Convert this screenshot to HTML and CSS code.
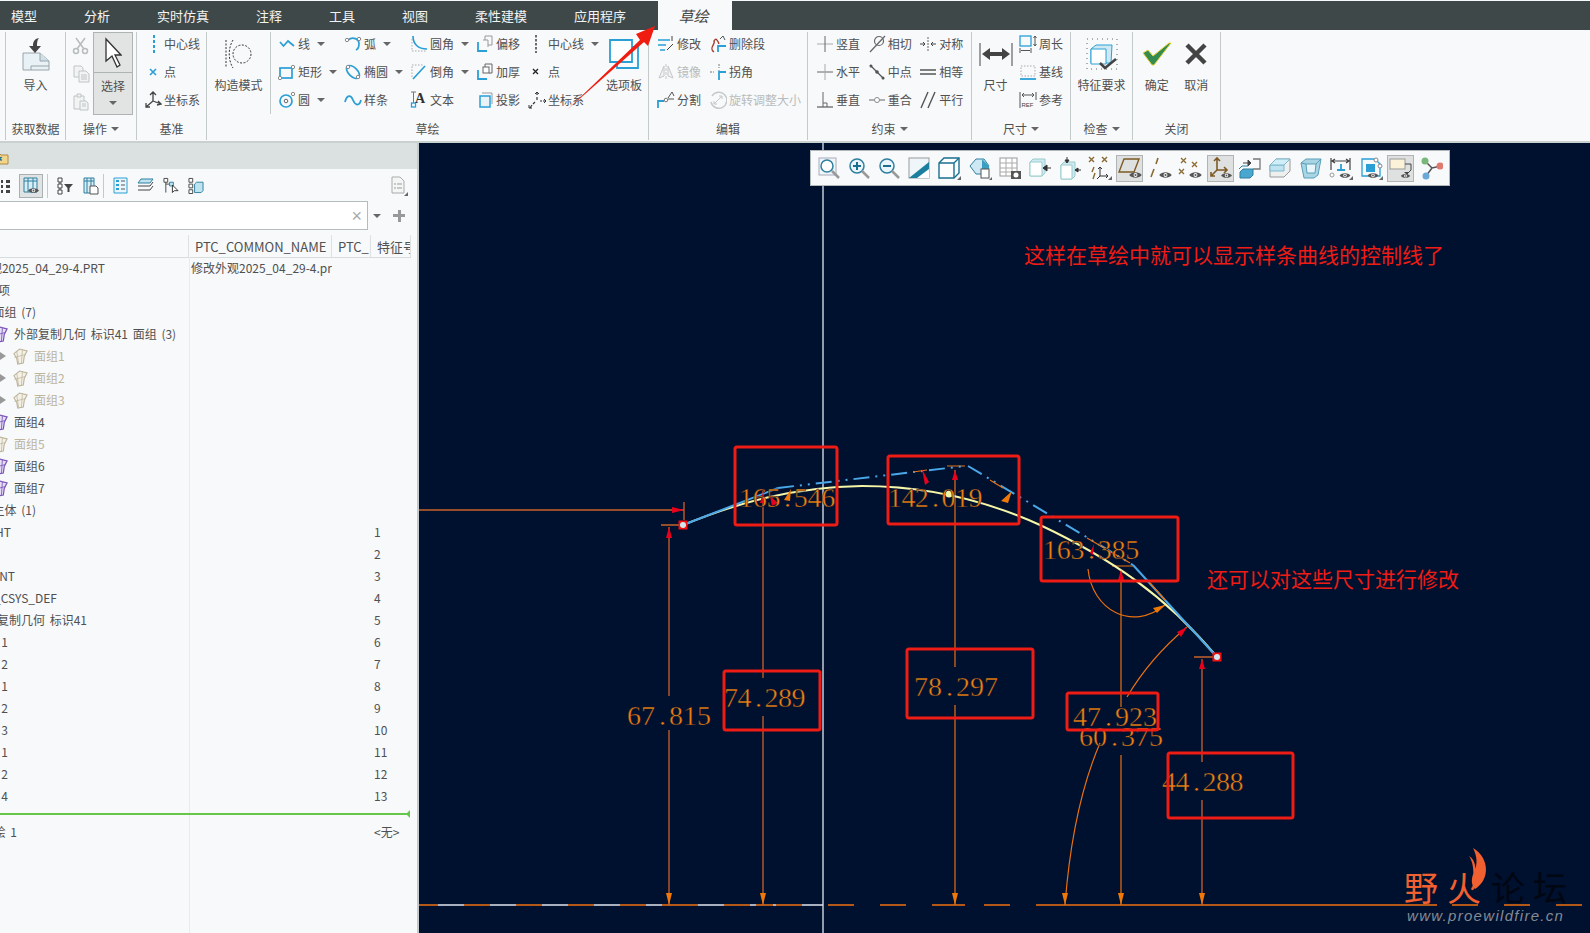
FILE: index.html
```html
<!DOCTYPE html>
<html lang="zh-CN">
<head>
    <meta charset="UTF-8">
    <title>草绘 - 样条曲线控制线</title>
    <link rel="stylesheet" href="styles.css">
</head>
<body>
    <svg class="defs">
        <symbol id="surface" viewBox="0 0 16 18">
            <path d="M1 6l6-5 8 2-3 6-1 7-6 1-1-6z" fill="#e6def6" stroke="#7a55b8" stroke-width="1.300"/>
            <path d="M4 3.500l2 13M1.500 10l11-3M10 2l-1 14" fill="none" stroke="#7a55b8" stroke-width=".9"/>
        </symbol>
        <symbol id="surface-off" viewBox="0 0 16 18">
            <path d="M1 6l6-5 8 2-3 6-1 7-6 1-1-6z" fill="#f4f1e6" stroke="#bdb49c" stroke-width="1.200"/>
            <path d="M4 3.500l2 13M1.500 10l11-3M10 2l-1 14" fill="none" stroke="#bdb49c" stroke-width=".8"/>
        </symbol>
        <symbol id="eye" viewBox="0 0 14 9">
            <path d="M0 4.5C3 .5 11 .5 14 4.5 11 8.500 3 8.500 0 4.500z" fill="#555"/>
            <circle cx="7" cy="4.500" r="2.200" fill="#fff"/>
            <circle cx="7" cy="4.500" r="1.200" fill="#555"/>
        </symbol>
        <symbol id="corner" viewBox="0 0 4 4"><path d="M4 0v4H0z" fill="#666"/></symbol>
    </svg>

    <!-- Tabs -->
    <nav class="tabs">
        <span class="tab">模型</span>
        <span class="tab">分析</span>
        <span class="tab">实时仿真</span>
        <span class="tab">注释</span>
        <span class="tab">工具</span>
        <span class="tab">视图</span>
        <span class="tab">柔性建模</span>
        <span class="tab">应用程序</span>
        <span class="tab tab-active">草绘</span>
    </nav>

    <!-- Ribbon -->
    <div class="ribbon">
        <section class="group group-data">
            <div class="group-body">
                <div class="big big-data">
                    <div class="big-icon">
                        <svg width="30" height="34" viewBox="0 0 30 34"><path d="M2 16h17l9 8v9H2z" fill="#e8f2f6" stroke="#9aa4a8"/><path d="M10 33v-4h18" fill="none" stroke="#9aa4a8"/><path d="M19 16v8h9" fill="#cfe0e8" stroke="#9aa4a8"/><path d="M18 1c-5 1-6 4-6 8H8l6 7 6-7h-4c0-3 0-6 2-8z" fill="#444"/></svg>
                    </div>
                    <span>导入</span>
                </div>
            </div>
            <div class="group-label">获取数据</div>
        </section>

        <section class="group group-ops">
            <div class="group-body">
                <div class="col col-clip">
                    <svg class="ic" viewBox="0 0 18 18"><g fill="none" stroke="#b8bcbc" stroke-width="1.500"><circle cx="4" cy="14" r="2.500"/><circle cx="13" cy="14" r="2.500"/><path d="M5 12L13 1M12 12L4 1"/></g></svg>
                    <svg class="ic" viewBox="0 0 18 18"><g fill="#f2f4f4" stroke="#c0c4c4"><path d="M2 1h7l2 2v9H2z"/><path d="M7 6h7l3 3v8H7z"/><path d="M9 10h6M9 12h6M9 14h6"/></g></svg>
                    <svg class="ic" viewBox="0 0 18 18"><g fill="#f2f4f4" stroke="#c0c4c4"><path d="M2 3h10v13H2z"/><path d="M5 1h4v3H5z"/><path d="M8 8h6l2 2v7H8z"/><path d="M10 11h4M10 13h4"/></g></svg>
                </div>
                <div class="select-btn">
                    <div class="select-top">
                        <svg width="18" height="32" viewBox="0 0 18 32"><path d="M2 2v22l6-5 5 11 3-2-5-10h6z" fill="#fff" stroke="#333" stroke-width="1.300"/></svg>
                    </div>
                    <div class="select-bottom">
                        <span>选择</span>
                        <i class="caret"></i>
                    </div>
                </div>
            </div>
            <div class="group-label">操作<i class="caret"></i></div>
        </section>

        <section class="group group-datum">
            <div class="group-body">
                <div class="col">
                    <div class="item"><svg class="ic" viewBox="0 0 18 18"><path d="M10 0v18" stroke="#2a9fd6" stroke-width="2" stroke-dasharray="3 2"/></svg><span>中心线</span></div>
                    <div class="item"><svg class="ic" viewBox="0 0 18 18"><path d="M6 6l6 6M12 6l-6 6" stroke="#2a9fd6" stroke-width="1.600"/></svg><span>点</span></div>
                    <div class="item"><svg class="ic" viewBox="0 0 18 18"><path d="M9 1v9M6 4l3-3 3 3M9 10l8 3M14 10l3 3-4 1M9 10l-7 6M2 12v4h4" fill="none" stroke="#444" stroke-width="1.300"/></svg><span>坐标系</span></div>
                </div>
            </div>
            <div class="group-label">基准</div>
        </section>

        <section class="group group-sketch">
            <div class="group-body">
                <div class="big big-mode">
                    <div class="big-icon">
                        <svg width="28" height="30" viewBox="0 0 28 30"><g fill="none" stroke="#333" stroke-dasharray="2 1.500"><path d="M1 1v28"/><path d="M8 1c-5 8-5 20 0 28"/><circle cx="17" cy="15" r="9"/></g></svg>
                    </div>
                    <span>构造模式</span>
                </div>
                <div class="col col-66">
                    <div class="item"><svg class="ic" viewBox="0 0 18 18"><path d="M2 7l3.500 4L10 6l6 5" fill="none" stroke="#2a9fd6" stroke-width="1.700"/></svg><span>线</span><i class="caret"></i></div>
                    <div class="item"><svg class="ic" viewBox="0 0 18 18"><rect x="2" y="5" width="12" height="10" fill="none" stroke="#2a9fd6" stroke-width="1.700"/><circle cx="2" cy="15" r="1.700" fill="#fff" stroke="#888"/><circle cx="15" cy="4" r="1.700" fill="#fff" stroke="#888"/></svg><span>矩形</span><i class="caret"></i></div>
                    <div class="item"><svg class="ic" viewBox="0 0 18 18"><circle cx="8" cy="10" r="6" fill="none" stroke="#2a9fd6" stroke-width="1.700"/><circle cx="8" cy="10" r="1.800" fill="none" stroke="#666"/><circle cx="15" cy="3" r="1.700" fill="#fff" stroke="#888"/></svg><span>圆</span><i class="caret"></i></div>
                </div>
                <div class="col col-66">
                    <div class="item"><svg class="ic" viewBox="0 0 18 18"><path d="M4 5c5-4 11-1 11 4 0 3-1 5-3 6" fill="none" stroke="#2a9fd6" stroke-width="1.700"/><circle cx="3" cy="5" r="1.700" fill="#fff" stroke="#888"/><circle cx="15" cy="4" r="1.700" fill="#fff" stroke="#888"/></svg><span>弧</span><i class="caret"></i></div>
                    <div class="item"><svg class="ic" viewBox="0 0 18 18"><ellipse cx="9" cy="9" rx="8" ry="4.500" transform="rotate(45 9 9)" fill="none" stroke="#2a9fd6" stroke-width="1.700"/><circle cx="4" cy="4" r="1.700" fill="#fff" stroke="#888"/><circle cx="14" cy="14" r="1.700" fill="#fff" stroke="#888"/></svg><span>椭圆</span><i class="caret"></i></div>
                    <div class="item"><svg class="ic" viewBox="0 0 18 18"><path d="M1 11C3 3 7 4 9 9s6 7 8 0" fill="none" stroke="#2a9fd6" stroke-width="1.800"/></svg><span>样条</span></div>
                </div>
                <div class="col col-66">
                    <div class="item"><svg class="ic" viewBox="0 0 18 18"><path d="M3 1c0 8 5 13 14 13" fill="none" stroke="#2a9fd6" stroke-width="1.700"/><path d="M2 4v12h14" fill="none" stroke="#aaa" stroke-dasharray="1.500 1.500"/></svg><span>圆角</span><i class="caret"></i></div>
                    <div class="item"><svg class="ic" viewBox="0 0 18 18"><path d="M3 16L15 3" fill="none" stroke="#2a9fd6" stroke-width="1.700"/><path d="M2 14V2h12" fill="none" stroke="#aaa" stroke-dasharray="1.500 1.500"/></svg><span>倒角</span><i class="caret"></i></div>
                    <div class="item"><svg class="ic" viewBox="0 0 18 18"><path d="M1 1h5M3.500 1v12" stroke="#777"/><rect x="1.500" y="12" width="4" height="4" fill="#fff" stroke="#2a9fd6" stroke-width="1.300"/><text x="5" y="12" class="ic-text">A</text></svg><span>文本</span></div>
                </div>
                <div class="col col-52">
                    <div class="item"><svg class="ic" viewBox="0 0 18 18"><path d="M9 5V1h7v9h-4" fill="none" stroke="#999"/><path d="M7 5H12v7" fill="none" stroke="#999"/><path d="M2 7v9h9" fill="none" stroke="#2a9fd6" stroke-width="1.800"/></svg><span>偏移</span></div>
                    <div class="item"><svg class="ic" viewBox="0 0 18 18"><path d="M9 4V1h7v9h-3" fill="none" stroke="#666"/><rect x="7" y="4" width="6" height="6" fill="#fff" stroke="#666"/><path d="M2 7v9h9" fill="none" stroke="#2a9fd6" stroke-width="1.800"/></svg><span>加厚</span></div>
                    <div class="item"><svg class="ic" viewBox="0 0 18 18"><path d="M6 2h10v11" fill="none" stroke="#999"/><path d="M4 5h10v11H4z" fill="#eaf4f8" stroke="#2a9fd6" stroke-width="1.500"/></svg><span>投影</span></div>
                </div>
                <div class="col col-72">
                    <div class="item"><svg class="ic" viewBox="0 0 18 18"><path d="M8 0v18" stroke="#222" stroke-width="1.300" stroke-dasharray="2.500 1.500"/></svg><span>中心线</span><i class="caret"></i></div>
                    <div class="item"><svg class="ic" viewBox="0 0 18 18"><path d="M5 6l5 5M10 6l-5 5" stroke="#222" stroke-width="1.300"/></svg><span>点</span></div>
                    <div class="item"><svg class="ic" viewBox="0 0 18 18"><path d="M9 1v3M9 6v3M12 10h2M15 10h3M7 11l-2 2M4 14l-2 3" stroke="#333" stroke-width="1.200"/><path d="M7 3l2-2 2 2M16 8l2 2-2 2M1 14v3h3" fill="none" stroke="#333"/></svg><span>坐标系</span></div>
                </div>
                <div class="big big-palette">
                    <div class="big-icon">
                        <svg width="30" height="30" viewBox="0 0 30 30"><path d="M1 1h22v22H1z" fill="#fdfefe" stroke="#2a9fd6" stroke-width="1.800"/><path d="M23 8h6v21H8v-6" fill="none" stroke="#2a9fd6" stroke-width="1.800"/></svg>
                    </div>
                    <span>选项板</span>
                </div>
            </div>
            <div class="group-label">草绘</div>
        </section>

        <section class="group group-edit">
            <div class="group-body">
                <div class="col col-52">
                    <div class="item"><svg class="ic" viewBox="0 0 18 18"><path d="M1 5h12M1 10h8M3 15h5" stroke="#2a9fd6" stroke-width="1.700"/><path d="M15 1v5M10 15l6-6" fill="none" stroke="#444"/></svg><span>修改</span></div>
                    <div class="item item-off"><svg class="ic" viewBox="0 0 18 18"><path d="M9 1v16" stroke="#c4c8c8" stroke-dasharray="3 1"/><path d="M7 3L2 15l5-2zM11 3l5 12-5-2z" fill="#f2f4f4" stroke="#c4c8c8"/></svg><span>镜像</span></div>
                    <div class="item"><svg class="ic" viewBox="0 0 18 18"><path d="M1 17V10h6" fill="none" stroke="#2a9fd6" stroke-width="1.800"/><circle cx="9" cy="9" r="1.800" fill="#fff" stroke="#777"/><path d="M11 8h6M11 7l4-6 2 4" fill="none" stroke="#555"/></svg><span>分割</span></div>
                </div>
                <div class="col col-edit">
                    <div class="item"><svg class="ic" viewBox="0 0 18 18"><path d="M5 17c-6-4 2-8 0-11 2-4 4 0 5 3" fill="none" stroke="#a33c2a" stroke-width="1.400"/><path d="M9 17v-6h8" fill="none" stroke="#2a9fd6" stroke-width="1.800"/><path d="M11 4l3-3 2 4" fill="none" stroke="#555"/></svg><span>删除段</span></div>
                    <div class="item"><svg class="ic" viewBox="0 0 18 18"><path d="M1 9h4M10 1v4M10 7v1" stroke="#777" stroke-dasharray="2 1"/><path d="M10 17v-8h7" fill="none" stroke="#2a9fd6" stroke-width="1.800"/></svg><span>拐角</span></div>
                    <div class="item item-off"><svg class="ic" viewBox="0 0 18 18"><path d="M3 5a8 8 0 1 1-1 6" fill="none" stroke="#c4c8c8" stroke-width="1.400"/><path d="M5 13l8-8M10 5h3v3M5 10v3h3" fill="none" stroke="#c4c8c8"/></svg><span>旋转调整大小</span></div>
                </div>
            </div>
            <div class="group-label">编辑</div>
        </section>

        <section class="group group-cons">
            <div class="group-body">
                <div class="col col-52">
                    <div class="item"><svg class="ic" viewBox="0 0 18 18"><path d="M1 9h16" stroke="#aaa"/><path d="M9 1v16" stroke="#666"/></svg><span>竖直</span></div>
                    <div class="item"><svg class="ic" viewBox="0 0 18 18"><path d="M1 9h16" stroke="#666"/><path d="M9 1v16" stroke="#aaa"/></svg><span>水平</span></div>
                    <div class="item"><svg class="ic" viewBox="0 0 18 18"><path d="M1 16h16" stroke="#666" stroke-width="1.300"/><path d="M7 1v15M7 12h4v4" fill="none" stroke="#666"/></svg><span>垂直</span></div>
                </div>
                <div class="col col-52">
                    <div class="item"><svg class="ic" viewBox="0 0 18 18"><circle cx="11" cy="6" r="4.500" fill="none" stroke="#666" stroke-width="1.200"/><path d="M2 17L17 1" stroke="#666" stroke-width="1.200"/></svg><span>相切</span></div>
                    <div class="item"><svg class="ic" viewBox="0 0 18 18"><path d="M2 2l14 14" stroke="#555" stroke-width="1.200"/><circle cx="3" cy="3" r="1.500" fill="#555"/><circle cx="9" cy="9" r="1.800" fill="#555"/><circle cx="15" cy="15" r="1.500" fill="#555"/></svg><span>中点</span></div>
                    <div class="item"><svg class="ic" viewBox="0 0 18 18"><path d="M1 9h5M12 9h5" stroke="#666"/><circle cx="9" cy="9" r="2.500" fill="#fff" stroke="#888"/></svg><span>重合</span></div>
                </div>
                <div class="col col-52">
                    <div class="item"><svg class="ic" viewBox="0 0 18 18"><path d="M9 2v14" stroke="#666" stroke-dasharray="2 1"/><path d="M1 9h5M17 9h-5M4 7l2 2-2 2M14 7l-2 2 2 2" fill="none" stroke="#444"/></svg><span>对称</span></div>
                    <div class="item"><svg class="ic" viewBox="0 0 18 18"><path d="M1 7h16M1 11h16" stroke="#555" stroke-width="1.400"/></svg><span>相等</span></div>
                    <div class="item"><svg class="ic" viewBox="0 0 18 18"><path d="M2 17L9 1M9 17l7-16" stroke="#555" stroke-width="1.400"/></svg><span>平行</span></div>
                </div>
            </div>
            <div class="group-label">约束<i class="caret"></i></div>
        </section>

        <section class="group group-dim">
            <div class="group-body">
                <div class="big big-dim">
                    <div class="big-icon">
                        <svg width="34" height="24" viewBox="0 0 34 24"><path d="M1 1v23M33 1v23" stroke="#444"/><path d="M3 12l8-6v4h12V6l8 6-8 6v-4H11v4z" fill="#444"/></svg>
                    </div>
                    <span>尺寸</span>
                </div>
                <div class="col">
                    <div class="item"><svg class="ic" viewBox="0 0 18 18"><rect x="1" y="1" width="11" height="10" fill="none" stroke="#2a9fd6" stroke-width="1.300"/><path d="M16 1v10M14.500 3L16 1l1.500 2M14.500 9l1.500 2 1.500-2M1 13v5M12 13v5M2 15.500h9" fill="none" stroke="#555"/></svg><span>周长</span></div>
                    <div class="item"><svg class="ic" viewBox="0 0 18 18"><rect x="2" y="3" width="14" height="10" fill="none" stroke="#aaa" stroke-dasharray="1.500 1.500"/><path d="M1 16h16" stroke="#2a9fd6" stroke-width="1.800"/></svg><span>基线</span></div>
                    <div class="item"><svg class="ic" viewBox="0 0 18 18"><path d="M1 1v16M17 1v8M3 4h12M5 2L3 4l2 2M13 2l2 2-2 2" fill="none" stroke="#555"/><text x="2.500" y="16" class="ic-ref">REF</text></svg><span>参考</span></div>
                </div>
            </div>
            <div class="group-label">尺寸<i class="caret"></i></div>
        </section>

        <section class="group group-check">
            <div class="group-body">
                <div class="big big-check">
                    <div class="big-icon">
                        <svg width="32" height="32" viewBox="0 0 32 32"><path d="M1 1h30v30H1z" fill="none" stroke="#666" stroke-dasharray="1 4"/><path d="M5 11l5-4h16l-1 18H5z" fill="#cfe9f4" stroke="#2a9fd6"/><path d="M5 11h15v15H5z" fill="#fff" stroke="#2a9fd6"/><path d="M14 25l5 5 11-9" fill="none" stroke="#444" stroke-width="2.500"/></svg>
                    </div>
                    <span>特征要求</span>
                </div>
            </div>
            <div class="group-label">检查<i class="caret"></i></div>
        </section>

        <section class="group group-close">
            <div class="group-body">
                <div class="big">
                    <div class="big-icon">
                        <svg width="30" height="24" viewBox="0 0 30 24"><path d="M1 11l5-3 5 6L27 1h2L12 23h-2z" fill="#358c4e" stroke="#e4d23c"/></svg>
                    </div>
                    <span>确定</span>
                </div>
                <div class="big">
                    <div class="big-icon">
                        <svg width="22" height="22" viewBox="0 0 22 22"><path d="M2 2l18 18M20 2L2 20" stroke="#444" stroke-width="4.500"/></svg>
                    </div>
                    <span>取消</span>
                </div>
            </div>
            <div class="group-label">关闭</div>
        </section>
    </div>

    <main class="workspace">
        <!-- Model tree -->
        <aside class="panel">
            <div class="panel-band">
                <svg class="band-folder" width="16" height="14" viewBox="0 0 16 14"><path d="M0 2h6l2 2h7v9H0z" fill="#f2d58c" stroke="#b08a3c"/><text x="2" y="11" class="ic-star">✱</text></svg>
            </div>
            <div class="panel-tools">
                <svg class="tool tool-grid" width="10" height="16" viewBox="0 0 10 16"><path d="M5 2h4v3H5zM5 7h4v3H5zM5 12h4v3H5zM0 2h2v3H0zM0 7h2v3H0zM0 12h2v3H0z" fill="#444"/></svg>
                <span class="tool-active">
                    <svg width="16" height="18" viewBox="0 0 16 18"><path d="M1 1h13v14H1z" fill="#d8eef6" stroke="#2f7f9f"/><path d="M1 4h13M5 1v14M10 1v14" stroke="#2f7f9f"/><use href="#eye" x="5" y="10" width="11" height="7"/></svg>
                </span>
                <i class="tool-sep"></i>
                <svg class="tool" width="17" height="18" viewBox="0 0 17 18"><path d="M1 1h4v4H1zM1 7h4v4H1zM1 13h4v4H1z" fill="#fff" stroke="#444"/><path d="M3 5v2M3 11v2" stroke="#444"/><path d="M7 7h9l-3.500 4v4h-2v-4z" fill="#444"/></svg>
                <svg class="tool" width="16" height="18" viewBox="0 0 16 18"><path d="M1 1h10v15H1z" fill="#d8eef6" stroke="#2f7f9f"/><path d="M1 4h10M4 1v15M8 1v15" stroke="#2f7f9f"/><path d="M7 9h6l2 2v6H7z" fill="#fff" stroke="#555"/></svg>
                <i class="tool-sep"></i>
                <svg class="tool" width="15" height="17" viewBox="0 0 15 17"><path d="M1 1h13v15H1z" fill="#eaf6fb" stroke="#2a9fd6"/><path d="M3 4h3M3 8h3M3 12h3" stroke="#2a9fd6" stroke-width="2"/><path d="M8 4h4M8 8h4M8 12h4" stroke="#555"/></svg>
                <svg class="tool" width="17" height="17" viewBox="0 0 17 17"><path d="M4 2h12l-3 4H1z" fill="#bfe4f0" stroke="#2f7f9f"/><path d="M1 9h12l3-4M1 13h12l3-4" fill="none" stroke="#444"/></svg>
                <svg class="tool" width="16" height="17" viewBox="0 0 17 17"><path d="M1 1h4v4H1z" fill="#fff" stroke="#444"/><path d="M3 5v11M3 7h4" stroke="#444"/><path d="M7 5h4v4H7z" fill="#bfe4f0" stroke="#2f7f9f"/><path d="M10 8v8l2-2 4 0z" fill="#fff" stroke="#333"/></svg>
                <svg class="tool" width="16" height="17" viewBox="0 0 17 17"><path d="M1 1h4v4H1zM1 7h4v4H1zM1 13h4v4H1z" fill="#fff" stroke="#444"/><path d="M7 7l2-2h7v9l-2 2H7z" fill="#bfe4f0" stroke="#2f7f9f"/></svg>
                <svg class="tool tool-doc" width="17" height="20" viewBox="0 0 17 20"><path d="M1 1h8l4 4v12H1z" fill="#f4f6f6" stroke="#aaa"/><path d="M3 8h2M3 12h2M6 8h5M6 12h5" stroke="#999"/><use href="#corner" x="13" y="16" width="4" height="4"/></svg>
            </div>
            <div class="search-row">
                <div class="search-box"><span class="search-x">×</span></div>
                <i class="caret"></i>
                <span class="search-plus"></span>
            </div>
            <div class="tree-head">
                <span></span>
                <span>PTC_COMMON_NAME</span>
                <span>PTC_MODIFIED</span>
                <span>特征号</span>
            </div>
            <div class="tree">
                <div class="row"><span class="clip w105"><span>修改外观2025_04_29-4.PRT</span></span><span class="col-name">修改外观2025_04_29-4.prt</span></div>
                <div class="row"><span class="clip w10"><span>注释项</span></span></div>
                <div class="row"><span class="clip w36"><span>面组 (7)</span></span></div>
                <div class="row"><span class="node"><svg class="surf"><use href="#surface"/></svg><span>外部复制几何 标识41 面组 (3)</span></span></div>
                <div class="row"><span class="node node-sub node-off"><i class="arrow"></i><svg class="surf"><use href="#surface-off"/></svg><span>面组1</span></span></div>
                <div class="row"><span class="node node-sub node-off"><i class="arrow"></i><svg class="surf"><use href="#surface-off"/></svg><span>面组2</span></span></div>
                <div class="row"><span class="node node-sub node-off"><i class="arrow"></i><svg class="surf"><use href="#surface-off"/></svg><span>面组3</span></span></div>
                <div class="row"><span class="node"><svg class="surf"><use href="#surface"/></svg><span>面组4</span></span></div>
                <div class="row"><span class="node node-off"><svg class="surf"><use href="#surface-off"/></svg><span>面组5</span></span></div>
                <div class="row"><span class="node"><svg class="surf"><use href="#surface"/></svg><span>面组6</span></span></div>
                <div class="row"><span class="node"><svg class="surf"><use href="#surface"/></svg><span>面组7</span></span></div>
                <div class="row"><span class="clip w36"><span>主体 (1)</span></span></div>
                <div class="row"><span class="clip w11"><span>RIGHT</span></span><span></span><span>1</span></div>
                <div class="row"><span></span><span></span><span>2</span></div>
                <div class="row"><span class="clip w15"><span>FRONT</span></span><span></span><span>3</span></div>
                <div class="row"><span class="clip w57"><span>PRT_CSYS_DEF</span></span><span></span><span>4</span></div>
                <div class="row"><span class="clip w87"><span>外部复制几何 标识41</span></span><span></span><span>5</span></div>
                <div class="row"><span class="clip w8"><span>曲线 1</span></span><span></span><span>6</span></div>
                <div class="row"><span class="clip w8"><span>曲线 2</span></span><span></span><span>7</span></div>
                <div class="row"><span class="clip w8"><span>点 1</span></span><span></span><span>8</span></div>
                <div class="row"><span class="clip w8"><span>点 2</span></span><span></span><span>9</span></div>
                <div class="row"><span class="clip w8"><span>曲线 3</span></span><span></span><span>10</span></div>
                <div class="row"><span class="clip w8"><span>基准 1</span></span><span></span><span>11</span></div>
                <div class="row"><span class="clip w8"><span>基准 2</span></span><span></span><span>12</span></div>
                <div class="row"><span class="clip w8"><span>曲线 4</span></span><span></span><span>13</span></div>
                <div class="insert-line"></div>
                <div class="row"><span class="clip w17"><span>草绘 1</span></span><span></span><span>&lt;无&gt;</span></div>
            </div>
        </aside>

        <!-- Sketch canvas -->
        <div class="canvas">
            <svg class="sketch" viewBox="419 143 1171 790">
                <path class="axis" d="M823 143V933"/>

                <!-- dashed baseline -->
                <path class="base-white" d="M438 905H464M490 905H516M542 905H568M594 905H620M646 905H662M698 905H724M750 905H756M773 905H776M802 905H823"/>
                <path class="base" d="M419 905H438M464 905H490M516 905H542M568 905H594M620 905H646M662 905H698M724 905H750M756 905H773M776 905H802M828 905H854M880 905H906M932 905H965M984 905H1010M1036 905H1437M1452 905H1478M1504 905H1530M1556 905H1582"/>

                <!-- dimension leaders -->
                <path class="leader" d="M419 510H684M684 502V520M661 525H684"/>
                <path class="leader" d="M669 527V696M669 730V905"/>
                <path class="leader" d="M763 490V678M763 716V905"/>
                <path class="leader-light" d="M955 470V667M955 705V905M947 466H965"/>
                <path class="leader-light" d="M1121 570V707M1121 755V905M1112 566H1133"/>
                <path class="leader" d="M1202 659V762M1202 800V905M1194 657H1213"/>
                <path class="leader-light" d="M1127 697C1143 670 1162 648 1187 627"/>
                <path class="leader-light" d="M1100 743C1082 785 1070 840 1065 905"/>
                <path class="leader-light" d="M1088 569C1092 610 1132 632 1165 605"/>

                <!-- spline and control polyline -->
                <path class="spline" d="M683 525C735 504 790 487 862 486C925 486 985 500 1040 525C1110 558 1165 595 1217 657"/>
                <path class="control" d="M683 525L778 488"/>
                <path class="control control-dash" d="M778 488L965 466"/>
                <path class="control control-dash" d="M968 466L1133 565"/>
                <path class="control" d="M1133 565L1217 657"/>
                <path class="leader-light" d="M913 472L927 470M990 480L1003 488M1087 538L1130 563M1150 583L1165 600"/>
                <circle class="spline-pt" cx="949" cy="494" r="3.500"/>
                <g>
                    <rect class="end-box" x="678.500" y="520.500" width="9" height="9"/>
                    <circle class="end-dot" cx="683" cy="525" r="3"/>
                    <rect class="end-box" x="1212.500" y="652.500" width="9" height="9"/>
                    <circle class="end-dot" cx="1217" cy="657" r="3"/>
                </g>

                <!-- arrows -->
                <g class="arrow-red">
                    <path d="M684 510L672 507V513Z"/>
                    <path d="M669 527L666 538H672Z"/>
                    <path d="M763 492L760 503H766Z"/>
                    <path d="M955 470L952 480H958Z"/>
                    <path d="M1121 570L1118 580H1124Z"/>
                    <path d="M1202 659L1199 669H1205Z"/>
                    <path d="M1187 627L1177 632L1181 637Z"/>
                    <path d="M922 469L925 485L929 482Z"/>
                    <path d="M770 496L778 503L772 506Z"/>
                    <path d="M1094 544L1090 553L1093 555Z"/>
                </g>
                <g class="arrow-orange">
                    <path d="M669 905L666 893H672Z"/>
                    <path d="M763 905L760 893H766Z"/>
                    <path d="M955 905L952 893H958Z"/>
                    <path d="M1065 905L1062 893H1068Z"/>
                    <path d="M1121 905L1118 893H1124Z"/>
                    <path d="M1202 905L1199 893H1205Z"/>
                    <path d="M1165 605L1153 608L1157 613Z"/>
                    <path d="M1012 491L1001 501L1008 503Z"/>
                    <path d="M791 489L784 500L790 501Z"/>
                </g>

                <!-- dimension values -->
                <text class="dim" x="739 752.700 766.400 784 793.800 807.500 821.200" y="507">165.546</text>
                <text class="dim" x="888 901.400 914.800 932 941.600 955 968.400" y="507">142.019</text>
                <text class="dim" x="724 737.500 755 764.500 778 791.500" y="707">74.289</text>
                <text class="dim" x="914 928 946 956 970 984" y="696">78.297</text>
                <text class="dim" x="627 641 659 669 683 697" y="725">67.815</text>
                <text class="dim" x="1043 1056.700 1070.400 1088 1097.800 1111.500 1125.200" y="559">163.385</text>
                <text class="dim" x="1079 1093 1111 1121 1135 1149" y="746">60.375</text>
                <text class="dim" x="1073 1087 1105 1115 1129 1143" y="726">47.923</text>
                <text class="dim" x="1162 1175.500 1193 1202.500 1216 1229.500" y="791">44.288</text>

                <!-- annotations -->
                <g class="mark">
                    <rect x="735" y="447" width="102" height="78" rx="2"/>
                    <rect x="888" y="456" width="131" height="68" rx="2"/>
                    <rect x="724" y="671" width="96" height="59" rx="2"/>
                    <rect x="907" y="649" width="126" height="69" rx="2"/>
                    <rect x="1041" y="517" width="137" height="64" rx="2"/>
                    <rect x="1067" y="693" width="91" height="37" rx="2"/>
                    <rect x="1168" y="753" width="125" height="65" rx="2"/>
                </g>
                <text class="note" x="1024" y="263">这样在草绘中就可以显示样条曲线的控制线了</text>
                <text class="note" x="1207" y="587">还可以对这些尺寸进行修改</text>

                <!-- watermark -->
                <path class="flame" d="M1473 848C1490 858 1490 880 1475 889C1470 884 1472 876 1474 872C1478 864 1477 856 1473 848ZM1469 856C1476 860 1477 870 1473 880C1474 870 1473 862 1469 856Z"/>
                <text class="logo logo-hot" x="1404 1447" y="901">野火</text>
                <text class="logo logo-dark" x="1491 1533" y="901">论坛</text>
                <text class="logo-url" x="1407" y="921">www.proewildfire.cn</text>
            </svg>

            <!-- Graphics toolbar -->
            <div class="view-bar">
                <span class="vb"><svg viewBox="0 0 24 24"><rect x="2" y="2" width="17" height="17" fill="#eef6fa" stroke="#aab"/><circle cx="10" cy="10" r="6" fill="#fff" stroke="#2f7f9f" stroke-width="1.500"/><path d="M15 15l7 7" stroke="#999" stroke-width="2.500"/></svg></span>
                <span class="vb"><svg viewBox="0 0 24 24"><circle cx="10" cy="10" r="7" fill="#eaf6fb" stroke="#2f7f9f" stroke-width="1.500"/><path d="M6 10h8M10 6v8" stroke="#1a6f90" stroke-width="2"/><path d="M15 15l7 7" stroke="#999" stroke-width="2.500"/></svg></span>
                <span class="vb"><svg viewBox="0 0 24 24"><circle cx="10" cy="10" r="7" fill="#eaf6fb" stroke="#2f7f9f" stroke-width="1.500"/><path d="M6 10h8" stroke="#1a6f90" stroke-width="2"/><path d="M15 15l7 7" stroke="#999" stroke-width="2.500"/></svg></span>
                <span class="vb"><svg viewBox="0 0 24 24"><rect x="2" y="2" width="20" height="20" fill="#eef6fa" stroke="#999"/><path d="M2 22L22 6v16z" fill="#1a7f9f"/><path d="M10 22l12-9v9z" fill="#fff"/></svg></span>
                <span class="vb"><svg viewBox="0 0 24 24"><path d="M2 7l5-5h15v15l-5 5H2z" fill="#fff" stroke="#1a6f90" stroke-width="1.400"/><path d="M2 7h15v15M17 7l5-5" fill="none" stroke="#1a6f90" stroke-width="1.400"/><use href="#corner" x="20" y="20" width="4" height="4"/></svg></span>
                <span class="vb"><svg viewBox="0 0 24 24"><path d="M2 10l6-7h8l5 7-7 8H8z" fill="#cfe9f4" stroke="#2f7f9f"/><path d="M14 3l7 7v3H14z" fill="#3a9fc0"/><rect x="13" y="13" width="8" height="9" fill="#fff" stroke="#555"/><use href="#corner" x="21" y="20" width="4" height="4"/></svg></span>
                <span class="vb"><svg viewBox="0 0 24 24"><rect x="2" y="2" width="17" height="18" fill="#fff" stroke="#999"/><path d="M2 7h17M2 12h17M2 16h17M8 2v18M14 2v18" stroke="#aaa"/><rect x="13" y="15" width="10" height="8" fill="#555"/><circle cx="18" cy="19" r="2.500" fill="#fff"/></svg></span>
                <span class="vb"><svg viewBox="0 0 24 24"><path d="M2 6l3-3h12v14l-3 3H2z" fill="#cfe9f4" stroke="#9cc"/><path d="M2 6h12v14H2z" fill="#fff" stroke="#9cc"/><path d="M23 12h-7M19 9l-4 3 4 3z" fill="#333" stroke="#333"/></svg></span>
                <span class="vb"><svg viewBox="0 0 24 24"><path d="M3 9l3-3h11v14l-3 3H3z" fill="#cfe9f4" stroke="#9cc"/><path d="M3 9h11v14H3z" fill="#fff" stroke="#9cc"/><path d="M9 1v5M7 4l2 3 2-3zM23 14h-5M20 12l-3 2 3 2z" fill="#333" stroke="#333"/></svg></span>
                <span class="vb"><svg viewBox="0 0 24 24"><path d="M1 1l5 5M6 1L1 6M14 1l5 5M19 1l-5 5M5 23l2-6M4 16l2-5" stroke="#8a6a30" stroke-width="1.400" fill="none"/><path d="M12 11v9h8M12 20l-3 3M10 13l2-2 2 2M18 18l2 2-2 2" stroke="#333" fill="none"/><use href="#corner" x="20" y="20" width="4" height="4"/></svg></span>
                <span class="vb vb-on"><svg viewBox="0 0 24 24"><path d="M6 3h15l-5 13H1z" fill="none" stroke="#7d5a24" stroke-width="1.400"/><use href="#eye" x="11" y="15" width="13" height="8"/></svg></span>
                <span class="vb"><svg viewBox="0 0 24 24"><path d="M10 2l-2 6M6 13l-3 8" stroke="#8a6a30" stroke-width="1.600"/><use href="#eye" x="11" y="15" width="13" height="8"/></svg></span>
                <span class="vb"><svg viewBox="0 0 24 24"><path d="M3 2l5 5M8 2L3 7M14 6l5 5M19 6l-5 5M1 13l5 5M6 13l-5 5" stroke="#8a6a30" stroke-width="1.300"/><use href="#eye" x="11" y="15" width="13" height="8"/></svg></span>
                <span class="vb vb-on"><svg viewBox="0 0 24 24"><path d="M9 2v12M6 5l3-3 3 3M9 14l10 0M16 11l3 3-3 3M9 14l-6 6M3 16v4h4" fill="none" stroke="#7d5a24" stroke-width="1.600"/><use href="#eye" x="13" y="16" width="11" height="7"/></svg></span>
                <span class="vb"><svg viewBox="0 0 24 24"><path d="M15 3h7v10h-7" fill="none" stroke="#777" stroke-width="1.300"/><path d="M5 7h7M10 4l3 3-3 3z" fill="#444" stroke="#444"/><path d="M2 16l3-3h10v6l-3 3H2z" fill="#4aa8d0" stroke="#2f7f9f"/><path d="M1 13l3-3h6" fill="none" stroke="#2f7f9f"/></svg></span>
                <span class="vb"><svg viewBox="0 0 24 24"><path d="M2 9l6-6h14v12l-6 6H2z" fill="#eef0f0" stroke="#999"/><path d="M2 9h14v6H2z" fill="#bfe4f0" stroke="#7fb8cc"/><path d="M8 3h14l-6 6H2z" fill="#cfeef8" stroke="#7fb8cc"/></svg></span>
                <span class="vb"><svg viewBox="0 0 24 24"><path d="M2 7l5-4h15l-3 16-4 3H5z" fill="#a8d4e4" stroke="#5a9fb8"/><path d="M7 8h10l-1 9H8z" fill="#e8f6fb" stroke="#5a9fb8"/><path d="M2 7l5 1M22 3l-5 5" stroke="#5a9fb8"/></svg></span>
                <span class="vb"><svg viewBox="0 0 24 24"><path d="M2 2v12M21 2v12M3 5h17M6 3L3 5l3 2M17 3l3 2-3 2" fill="none" stroke="#444" stroke-width="1.200"/><path d="M12 8v6M8 14h8" stroke="#2a9fd6" stroke-width="1.800"/><circle cx="3" cy="19" r="2" fill="#fff" stroke="#999"/><use href="#eye" x="10" y="16" width="12" height="7"/><use href="#corner" x="20" y="20" width="4" height="4"/></svg></span>
                <span class="vb"><svg viewBox="0 0 24 24"><path d="M3 3h13l5 5v12H3z" fill="none" stroke="#2a9fd6" stroke-width="1.300"/><rect x="7" y="8" width="9" height="8" fill="#2a9fd6"/><circle cx="17" cy="4" r="2" fill="#fff" stroke="#888"/><circle cx="21" cy="10" r="2" fill="#fff" stroke="#888"/><use href="#eye" x="8" y="16" width="12" height="7"/><use href="#corner" x="20" y="20" width="4" height="4"/></svg></span>
                <span class="vb vb-on"><svg viewBox="0 0 24 24"><rect x="1" y="3" width="15" height="10" fill="#fbf2d8" stroke="#999"/><path d="M16 8h6v6l-4 4" fill="none" stroke="#444"/><path d="M15 16l3 3 2-3" fill="#444"/><use href="#eye" x="11" y="17" width="11" height="6"/></svg></span>
                <span class="vb"><svg viewBox="0 0 24 24"><path d="M6 5l7 7 9-2M13 12L7 20" stroke="#555" stroke-width="1.500" fill="none"/><circle cx="6" cy="5" r="3.500" fill="#7ab87a"/><circle cx="21" cy="10" r="3.500" fill="#e07a70"/><circle cx="7" cy="20" r="3.500" fill="#6aa8d8"/></svg></span>
            </div>

            <!-- Red arrow pointing at the sketch tab -->
            <svg class="tab-arrow" width="100" height="100" viewBox="560 20 100 100"><path d="M567 110L640 40L636 34L655 26L648 46L644 42Z" fill="#f01c10"/></svg>
        </div>
    </main>
</body>
</html>
```

FILE: styles.css
```css
* {
    box-sizing: border-box;
}

html, body {
    margin: 0;
    padding: 0;
}

body {
    width: 1590px;
    height: 933px;
    overflow: hidden;
    display: flex;
    flex-direction: column;
    padding-top: 1px;
    background-color: #f7f9fb;
    color: #505050;
    font-family: "Noto Sans CJK SC", "Noto Sans", sans-serif;
    font-size: 12px;
    line-height: 18px;
}

.defs {
    position: absolute;
    width: 0;
    height: 0;
}

/* Tabs */
.tabs {
    height: 29px;
    flex: none;
    display: flex;
    align-items: center;
    padding-left: 11px;
    gap: 47px;
    background-color: #3f4848;
}

.tab {
    font-size: 13px;
    color: #f2f4f4;
}

.tab-active {
    align-self: stretch;
    width: 74px;
    margin-left: -15px;
    padding-right: 3px;
    display: flex;
    align-items: center;
    justify-content: center;
    background-color: #f7f9fb;
    color: #444;
    font-size: 15px;
    font-style: italic;
}

/* Ribbon */
.ribbon {
    height: 113px;
    flex: none;
    display: flex;
    padding-left: 5px;
    background-color: #f7f9fb;
    border-bottom: 2px solid #c9d0d0;
}

.group {
    height: 108px;
    margin-top: 2px;
    display: flex;
    flex-direction: column;
    border-right: 1px solid #c4caca;
}

.group-data {
    width: 61px;
    border-left: 1px solid #c4caca;
}

.group-ops { width: 71px; }
.group-datum { width: 70px; }
.group-sketch { width: 442px; }
.group-edit { width: 159px; }
.group-cons { width: 164px; }
.group-dim { width: 99px; }
.group-check { width: 62px; }
.group-close { width: 88px; }

.group-datum .group-body { padding-left: 7px; }
.group-edit .group-body { padding-left: 8px; }
.group-cons .group-body { padding-left: 8px; }
.group-close .group-body { padding: 0 4px; }

.group-body {
    height: 85px;
    display: flex;
}

.group-label {
    height: 23px;
    display: flex;
    align-items: center;
    justify-content: center;
    gap: 4px;
}

.col {
    display: grid;
    grid-auto-rows: 28px;
    margin-top: -2px;
}

.col-52 { width: 52px; }
.col-66 { width: 66px; }
.col-72 { width: 72px; }
.col-edit { flex: 1; }

.item {
    display: flex;
    align-items: center;
    gap: 2px;
    white-space: nowrap;
}

.item-off {
    color: #b8bcbc;
}

.ic {
    width: 18px;
    height: 18px;
    flex: none;
}

.ic-text {
    font-family: "Liberation Serif", serif;
    font-size: 14px;
    font-weight: 700;
    fill: #333;
}

.ic-ref {
    font-family: "Liberation Sans", sans-serif;
    font-size: 6px;
    fill: #444;
}

.ic-star {
    font-size: 9px;
    fill: #1a6f90;
}

.caret {
    width: 0;
    height: 0;
    flex: none;
    margin-left: 5px;
    border-left: 4px solid transparent;
    border-right: 4px solid transparent;
    border-top: 4px solid #666;
}

.group-label .caret {
    margin-left: 0;
}

.big {
    width: 40px;
    flex: 1;
    display: flex;
    flex-direction: column;
    align-items: center;
    white-space: nowrap;
}

.big-icon {
    height: 44px;
    width: 100%;
    flex: none;
    display: flex;
    align-items: center;
    justify-content: center;
}

.big-mode {
    flex: none;
    width: 64px;
    height: 82px;
    margin-right: 7px;
    border-right: 1px solid #c4caca;
}

.big-palette { flex: none; width: 48px; }
.big-dim { flex: none; width: 47px; }

/* Select button */
.col-clip {
    width: 27px;
    padding-left: 6px;
    margin-top: 0;
    align-items: center;
}

.select-btn {
    width: 40px;
    height: 83px;
    display: flex;
    flex-direction: column;
    background-color: #e2e4e4;
    border: 1px solid #aeb4b4;
}

.select-top {
    height: 40px;
    display: flex;
    align-items: center;
    justify-content: center;
    border-bottom: 1px solid #aeb4b4;
}

.select-bottom {
    flex: 1;
    display: flex;
    flex-direction: column;
    align-items: center;
    padding-top: 4px;
    gap: 6px;
}

.select-bottom .caret {
    margin-left: 0;
}

/* Workspace */
.workspace {
    flex: 1;
    display: flex;
    min-height: 0;
}

.panel {
    width: 419px;
    flex: none;
    display: flex;
    flex-direction: column;
    overflow: hidden;
    background-color: #f7f9fb;
    border-right: 2px solid #c4caca;
}

.panel-band {
    height: 26px;
    flex: none;
    padding-top: 8px;
    background-color: #dbe0e0;
}

.band-folder {
    display: block;
    margin-left: -7px;
}

.panel-tools {
    height: 32px;
    flex: none;
    display: flex;
    align-items: center;
    gap: 9px;
    padding-top: 1px;
}

.tool {
    flex: none;
}

.tool-grid {
    margin-left: 1px;
    margin-right: -1px;
}

.tool-active {
    width: 24px;
    height: 24px;
    display: flex;
    align-items: center;
    justify-content: center;
    background-color: #dfe3e3;
    border: 1px solid #aab0b0;
}

.tool-sep {
    width: 1px;
    height: 24px;
    margin-left: -5px;
    background-color: #c4caca;
}

.tool-doc {
    margin-left: auto;
    margin-right: 9px;
}

.search-row {
    height: 29px;
    flex: none;
    display: flex;
    align-items: center;
}

.search-box {
    width: 368px;
    height: 29px;
    display: flex;
    align-items: center;
    justify-content: flex-end;
    padding-right: 5px;
    background-color: #fff;
    border: 1px solid #b5bcbc;
    border-left: none;
}

.search-x {
    font-family: "Liberation Sans", sans-serif;
    font-size: 18px;
    color: #aaa;
}

.search-row .caret {
    margin-left: 5px;
}

.search-plus {
    width: 12px;
    height: 12px;
    margin-left: 12px;
    background:
        linear-gradient(#999, #999) center / 12px 3px no-repeat,
        linear-gradient(#999, #999) center / 3px 12px no-repeat;
}

.tree-head {
    width: 411px;
    height: 23px;
    flex: none;
    margin-top: 5px;
    display: grid;
    grid-template-columns: 189px 143px 39px 40px;
    border-bottom: 1px solid #d8dcdc;
    font-size: 13px;
}

.tree-head span {
    overflow: hidden;
    white-space: nowrap;
    padding-left: 6px;
    line-height: 24px;
    border-right: 1px solid #dde1e1;
}

.tree {
    flex: 1;
    position: relative;
    margin-top: -1px;
    word-spacing: 2px;
}

.tree::before {
    content: "";
    position: absolute;
    left: 189px;
    top: 0;
    bottom: 0;
    width: 1px;
    background-color: #e8ecee;
}

.row {
    height: 22px;
    display: grid;
    grid-template-columns: 189px 185px 1fr;
    align-items: center;
    white-space: nowrap;
}

.col-name {
    padding-left: 2px;
    width: 143px;
    overflow: hidden;
}

.clip {
    display: flex;
    justify-content: flex-end;
    overflow: hidden;
}

.clip span {
    flex: none;
}

.w8 { width: 8px; }
.w10 { width: 10px; }
.w11 { width: 11px; }
.w15 { width: 15px; }
.w17 { width: 17px; }
.w36 { width: 36px; }
.w57 { width: 57px; }
.w87 { width: 87px; }
.w105 { width: 105px; }

.node {
    display: flex;
    align-items: center;
    gap: 6px;
    margin-left: -7px;
}

.node-sub {
    margin-left: 0;
}

.node-off {
    color: #bdb49c;
}

.surf {
    width: 15px;
    height: 17px;
    flex: none;
}

.arrow {
    width: 0;
    height: 0;
    margin-right: 1px;
    border-top: 4px solid transparent;
    border-bottom: 4px solid transparent;
    border-left: 6px solid #999;
}

.insert-line {
    width: 410px;
    height: 2px;
    margin: 6px 0 6px;
    position: relative;
    background-color: #66c84a;
}

.insert-line::after {
    content: "";
    position: absolute;
    right: 0;
    top: -3px;
    border-top: 4px solid transparent;
    border-bottom: 4px solid transparent;
    border-right: 4px solid #66c84a;
}

/* Canvas */
.canvas {
    flex: 1;
    position: relative;
    background-color: #00102f;
}

.sketch {
    display: block;
    width: 1171px;
    height: 790px;
}

.axis {
    fill: none;
    stroke: #c4cad8;
    stroke-width: 1.500;
}

.base {
    stroke: #f07010;
    stroke-width: 1.300;
    fill: none;
}

.base-white {
    stroke: #dfe4ee;
    stroke-width: 1.300;
    fill: none;
}

.leader {
    fill: none;
    stroke: #c8622a;
    stroke-width: 1.300;
}

.leader-light {
    fill: none;
    stroke: #e8700f;
    stroke-width: 1.200;
}

.arrow-red { fill: #e8001c; }
.arrow-orange { fill: #f07808; }

.control {
    fill: none;
    stroke: #4aa8e8;
    stroke-width: 2;
}

.control-dash {
    stroke-dasharray: 16 6 2 6 2 6;
}

.spline {
    fill: none;
    stroke: #f6f6a8;
    stroke-width: 2;
}

.spline-pt { fill: #f6f6a8; }
.end-box { fill: #f01010; }
.end-dot { fill: #cfe8f0; }

/* the stroke in the canvas colour thins the glyphs down */
.dim {
    font-family: "Liberation Serif", serif;
    font-size: 28px;
    fill: #f08010;
    stroke: #00102f;
    stroke-width: .45;
}

.mark rect {
    fill: none;
    stroke: #ee1c14;
    stroke-width: 3;
}

.note {
    font-family: "Noto Sans CJK SC", sans-serif;
    font-size: 21px;
    fill: #ee1c14;
}

.flame { fill: #f06030; }

.logo {
    font-family: "Noto Sans CJK SC", sans-serif;
    font-size: 34px;
}

.logo-hot { fill: #f06030; }
.logo-dark { fill: #000612; }

.logo-url {
    font-family: "Liberation Sans", sans-serif;
    font-size: 15px;
    font-style: italic;
    letter-spacing: 1.300px;
    fill: #858b94;
}

.view-bar {
    position: absolute;
    left: 391px;
    top: 7px;
    width: 640px;
    height: 36px;
    padding: 0 3px;
    display: grid;
    grid-template-columns: repeat(21, 1fr);
    align-items: center;
    justify-items: center;
    background-color: #f7f9fb;
    border: 1px solid #b4b8b8;
}

.vb {
    width: 27px;
    height: 27px;
    display: flex;
    align-items: center;
    justify-content: center;
}

.vb svg {
    width: 24px;
    height: 24px;
}

.vb-on {
    background-color: #dfe1e1;
    border: 1px solid #b0b4b4;
}

/* sits over the ribbon and the tab bar */
.tab-arrow {
    position: absolute;
    left: 141px;
    top: -123px;
}
```
